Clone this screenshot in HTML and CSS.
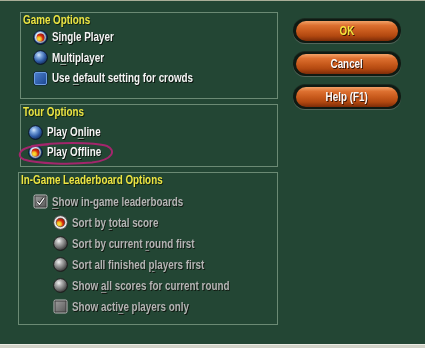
FILE: index.html
```html
<!DOCTYPE html>
<html>
<head>
<meta charset="utf-8">
<link rel="stylesheet" href="styles.css">
</head>
<body>
<svg class="defs" width="0" height="0" aria-hidden="true">
  <defs>
    <radialGradient id="gBlue" cx="0.38" cy="0.32" r="0.72">
      <stop offset="0" stop-color="#d4e6fb"/>
      <stop offset="0.28" stop-color="#7aa4dc"/>
      <stop offset="0.65" stop-color="#2f5ca6"/>
      <stop offset="1" stop-color="#132a52"/>
    </radialGradient>
    <radialGradient id="gGrey" cx="0.38" cy="0.32" r="0.72">
      <stop offset="0" stop-color="#f2f2f2"/>
      <stop offset="0.3" stop-color="#b0b0b0"/>
      <stop offset="0.68" stop-color="#6c6c6c"/>
      <stop offset="1" stop-color="#2e2e2e"/>
    </radialGradient>
    <radialGradient id="gRed" cx="0.32" cy="0.7" r="0.8">
      <stop offset="0" stop-color="#fbe93c"/>
      <stop offset="0.35" stop-color="#f3b320"/>
      <stop offset="0.6" stop-color="#d62e12"/>
      <stop offset="1" stop-color="#9a1208"/>
    </radialGradient>
    <linearGradient id="gRing" x1="0" y1="0" x2="1" y2="1">
      <stop offset="0" stop-color="#ffffff"/>
      <stop offset="1" stop-color="#9a9a9a"/>
    </linearGradient>
    <linearGradient id="gBox" x1="0" y1="0" x2="1" y2="1">
      <stop offset="0" stop-color="#4b7fcc"/>
      <stop offset="1" stop-color="#1c4690"/>
    </linearGradient>
    <linearGradient id="gBoxGrey" x1="0" y1="0" x2="1" y2="1">
      <stop offset="0" stop-color="#9a9a9a"/>
      <stop offset="1" stop-color="#5c5c5c"/>
    </linearGradient>
    <symbol id="radio-blue" viewBox="0 0 15 15">
      <circle cx="7.5" cy="7.5" r="6.9" fill="url(#gBlue)" stroke="#0b1624" stroke-width="1"/>
    </symbol>
    <symbol id="radio-blue-on" viewBox="0 0 15 15">
      <circle cx="7.5" cy="7.5" r="6.9" fill="url(#gBlue)" stroke="#0b1624" stroke-width="1"/>
      <circle cx="7.5" cy="7.5" r="4.7" fill="none" stroke="url(#gRing)" stroke-width="1.5"/>
      <circle cx="7.5" cy="7.5" r="3.9" fill="url(#gRed)"/>
    </symbol>
    <symbol id="radio-grey" viewBox="0 0 15 15">
      <circle cx="7.5" cy="7.5" r="6.9" fill="url(#gGrey)" stroke="#1c1c1c" stroke-width="1"/>
    </symbol>
    <symbol id="radio-grey-on" viewBox="0 0 15 15">
      <circle cx="7.5" cy="7.5" r="6.9" fill="#e6e6e6" stroke="#3a3a3a" stroke-width="1"/>
      <circle cx="7.5" cy="7.5" r="4.7" fill="#5a5a5a"/>
      <circle cx="7.5" cy="7.5" r="4" fill="url(#gRed)"/>
    </symbol>
    <symbol id="check-blue" viewBox="0 0 15 15">
      <rect x="0.5" y="0.5" width="14" height="14" rx="2.5" fill="#0d1c34"/>
      <rect x="1.5" y="1.5" width="12" height="12" rx="1.5" fill="url(#gBox)" stroke="#6d9ee2" stroke-width="1"/>
    </symbol>
    <symbol id="check-grey-on" viewBox="0 0 15 15">
      <rect x="1" y="1" width="13" height="13" rx="1.5" fill="#3a3a3a" stroke="#c4c4c4" stroke-width="1"/>
      <rect x="2.5" y="2.5" width="10" height="10" fill="url(#gBoxGrey)"/>
      <path d="M4.1 7.7 L6.5 10.3 L11.1 4.1" fill="none" stroke="#111" stroke-width="2.6"/>
      <path d="M4.1 7.7 L6.5 10.3 L11.1 4.1" fill="none" stroke="#f2f2f2" stroke-width="1.4"/>
    </symbol>
    <symbol id="check-grey" viewBox="0 0 15 15">
      <rect x="1" y="1" width="13" height="13" rx="1.5" fill="#3a3a3a" stroke="#bcbcbc" stroke-width="1"/>
      <rect x="2.5" y="2.5" width="10" height="10" fill="url(#gBoxGrey)"/>
    </symbol>
  </defs>
</svg>

<div class="top-line"></div>

<main class="dialog">
  <div class="groups">
    <section class="group game">
      <div class="group-title"><span class="nx">Game Options</span></div>
      <div class="opt"><svg class="ico"><use href="#radio-blue-on"/></svg><span class="nx">S<u>i</u>ngle Player</span></div>
      <div class="opt"><svg class="ico"><use href="#radio-blue"/></svg><span class="nx">M<u>u</u>ltiplayer</span></div>
      <div class="opt"><svg class="ico"><use href="#check-blue"/></svg><span class="nx">Use <u>d</u>efault setting for crowds</span></div>
    </section>

    <section class="group tour">
      <div class="group-title"><span class="nx">Tour Options</span></div>
      <div class="opt"><svg class="ico"><use href="#radio-blue"/></svg><span class="nx">Play O<u>n</u>line</span></div>
      <div class="opt"><svg class="ico"><use href="#radio-blue-on"/></svg><span class="nx">Play O<u>f</u>fline</span></div>
      <svg class="scribble" viewBox="0 0 96 23" width="96" height="23">
        <path d="M14 4 C36 0, 76 0, 89 4 C98 8, 96 18, 74 20.5 C52 22.5, 20 22, 6 17.5 C-1 14.5, 1 8, 10 5.5 C16 3.8, 24 3, 30 2.6" fill="none" stroke="#a3266c" stroke-width="2" stroke-linecap="round"/>
      </svg>
    </section>

    <section class="group board">
      <div class="group-title"><span class="nx">In-Game Leaderboard Options</span></div>
      <div class="opt dis"><svg class="ico"><use href="#check-grey-on"/></svg><span class="nx"><u>S</u>how in-game leaderboards</span></div>
      <div class="opt dis sub"><svg class="ico"><use href="#radio-grey-on"/></svg><span class="nx">Sort by <u>t</u>otal score</span></div>
      <div class="opt dis sub"><svg class="ico"><use href="#radio-grey"/></svg><span class="nx">Sort by current <u>r</u>ound first</span></div>
      <div class="opt dis sub"><svg class="ico"><use href="#radio-grey"/></svg><span class="nx">Sort all finished <u>p</u>layers first</span></div>
      <div class="opt dis sub"><svg class="ico"><use href="#radio-grey"/></svg><span class="nx">Show <u>a</u>ll scores for current round</span></div>
      <div class="opt dis sub"><svg class="ico"><use href="#check-grey"/></svg><span class="nx">Show acti<u>v</u>e players only</span></div>
    </section>
  </div>

  <div class="buttons">
    <div class="btn"><span class="pill ok"><span class="nx c">OK</span></span></div>
    <div class="btn"><span class="pill"><span class="nx c">Cancel</span></span></div>
    <div class="btn"><span class="pill"><span class="nx c">Help (F1)</span></span></div>
  </div>
</main>

<div class="bottom-bar"></div>
</body>
</html>
```

FILE: styles.css
```css
* { box-sizing: border-box; }

html, body {
  margin: 0;
  padding: 0;
}

body {
  width: 425px;
  height: 348px;
  overflow: hidden;
  background: #234634;
  display: flex;
  flex-direction: column;
  font-family: "Liberation Sans", Arial, sans-serif;
  font-weight: bold;
  font-size: 12px;
  color: #f4f4f4;
}

/* narrow rendering of the dialog font */
.nx {
  display: inline-block;
  transform: scaleX(0.82);
  transform-origin: left center;
  white-space: nowrap;
}
.nx.c { transform-origin: center center; }

.defs {
  display: block;
  width: 0;
  height: 0;
  overflow: hidden;
}

.top-line {
  height: 1px;
  background: #a9ae98;
  flex: none;
}

.dialog {
  flex: 1;
  display: flex;
  align-items: flex-start;
  padding-top: 11px;
}

.groups {
  display: flex;
  flex-direction: column;
  gap: 5px;
  padding-left: 20px;
}

.group {
  position: relative;
  width: 258px;
  border: 1px solid #6b8a74;
}

.group-title {
  height: 14px;
  line-height: 14px;
  padding-left: 2px;
  color: #ece443;
  text-shadow: 1px 1px 0 #10200f;
}

.opt {
  display: flex;
  align-items: center;
  gap: 4px;
  height: 21px;
  text-shadow: 1px 1px 0 #0a120c;
  white-space: nowrap;
}

.opt u {
  text-decoration-color: #9aa79e;
  text-underline-offset: 2px;
}

.ico {
  width: 15px;
  height: 15px;
  flex: none;
}

.game {
  height: 87px;
  padding-left: 12px;
}
.game .group-title { margin-left: -12px; }
.game .opt { height: 20.5px; }

.tour {
  height: 63px;
  padding-left: 7px;
}
.tour .group-title { margin-left: -7px; margin-bottom: 3px; }
.tour .opt { height: 20px; }

.scribble {
  position: absolute;
  left: -3px;
  top: 37px;
}

.board {
  height: 153px;
  width: 260px;
  margin-left: -2px;
  padding-left: 14px;
}
.board .group-title { margin-left: -14px; margin-bottom: 4px; }

.opt.dis {
  color: #b4b4b4;
  text-shadow: 1px 1px 0 #101810;
}
.opt.dis u { text-decoration-color: #8c8c8c; }

.opt.sub { padding-left: 20px; }

.buttons {
  display: flex;
  flex-direction: column;
  gap: 9px;
  margin-left: 15px;
  padding-top: 7px;
}

.btn {
  width: 108px;
  height: 24px;
  border-radius: 12px;
  background: #0f1a13;
  padding: 2px 3px;
  box-shadow: 0 1px 0 #53665a, 0 -1px 0 #1a2a20;
}

.pill {
  display: flex;
  align-items: center;
  justify-content: center;
  height: 20px;
  border-radius: 10px;
  background: linear-gradient(to bottom, #f2a268 0%, #dd7030 22%, #c85a1c 50%, #b24810 75%, #7c2c08 100%);
  color: #fafafa;
  text-shadow: 1px 1px 0 #3a1404;
  font-size: 12px;
}

.pill.ok { color: #f5e43c; }

.bottom-bar {
  flex: none;
  height: 4px;
  background: #d2d2c8;
  border-top: 1px solid #eeeee6;
}
```
